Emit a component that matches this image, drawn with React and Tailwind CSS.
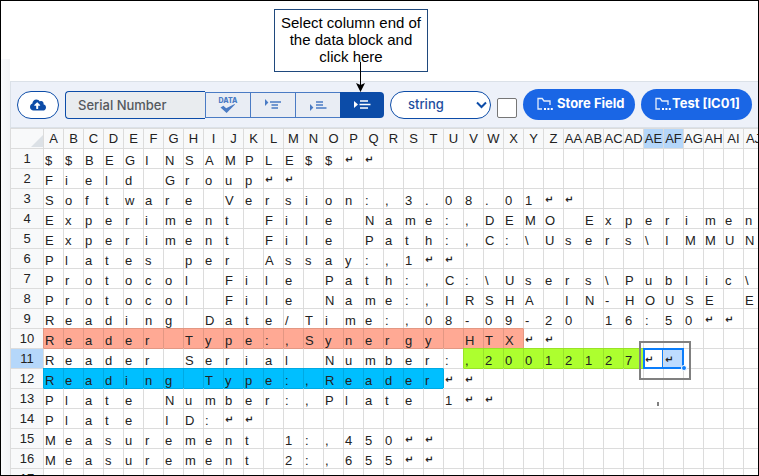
import React from "react";
import { FaCloudUploadAlt } from "react-icons/fa";

const ROWS = [
  "$$BEGINSAMPLE$$↵↵",
  "Field Group↵↵",
  "Software Version:,3.08.01↵↵",
  "Experiment File Name:,DEMO Experimen",
  "Experiment File Path:,C:\\Users\\IMMUN",
  "Plates per Assay:,1↵↵",
  "Protocol File Path:,C:\\Users\\Public\\",
  "Protocol File Name:,IRSHA IN-HOUSE E",
  "Reading Date/Time:,08-09-20 16:50↵↵",
  "Reader Type:,Synergy HTX↵↵",
  "Reader Serial Number:,20012127↵↵",
  "Reading Type:,Reader↵↵",
  "Plate Number:,Plate 1↵↵",
  "Plate ID:↵↵",
  "Measurement 1:,450↵↵",
  "Measurement 2:,655↵↵",
  "",
];

const COLS = Array.from({ length: 36 }, (_, i) =>
  i < 26 ? String.fromCharCode(65 + i) : "A" + String.fromCharCode(39 + i)
);

// Highlighted blocks: row index, first and last column, fill and grid line colours
const BLOCKS = [
  { row: 9, from: 0, to: 23, fill: "bg-[#ffa994]", left: "border-l-[#e29783]", top: "border-t-[#e29783]" },
  { row: 10, from: 21, to: 29, fill: "bg-[#adff2f]", left: "border-l-[#99e229]", top: "border-t-[#99e229]" },
  { row: 11, from: 0, to: 19, fill: "bg-[#00bfff]", left: "border-l-[#00a9e2]", top: "border-t-[#00a9e2]" },
];

function inBlock(b, r, c) {
  return b.row === r && c >= b.from && c <= b.to;
}

function cellStyle(r, c) {
  const own = BLOCKS.find((b) => inBlock(b, r, c));
  const before = BLOCKS.find((b) => inBlock(b, r, c - 1));
  const above = BLOCKS.find((b) => inBlock(b, r - 1, c));
  const fill = own ? own.fill : r === 10 && c === 31 ? "bg-[#bedcff]" : "bg-white";
  const left = own ? own.left : before ? before.left : "border-l-[#dcdcdc]";
  const top = own ? own.top : above ? above.top : "border-t-[#dcdcdc]";
  return `${fill} ${left} ${top}`;
}

function DataIcon() {
  return (
    <span className="flex flex-col items-center text-[#4a7bc4]">
      <span className="text-[7px] leading-[7px] font-extrabold">DATA</span>
      <svg width="16" height="9" viewBox="0 0 16 9" fill="currentColor">
        <path d="M.5 3.4 3.4 1.8 6.2 4.2 14.6 0 15 .5 6.6 8.9Z" />
      </svg>
    </span>
  );
}

function LinesIcon({ at }) {
  const flag = {
    top: "M1 1 4.4 4.5 1 8Z",
    bottom: "M1 6 4.4 9.5 1 13Z",
    middle: "M1 3 5 6.5 1 10Z",
  }[at];
  const lines = {
    top: "M6 4H17M7.5 7H14M7.5 10H14",
    bottom: "M7 4H14M7 7H14M7 10H17.5",
    middle: "M7 3H15M6.5 6.5H17.5M7 10H15",
  }[at];
  return (
    <svg width="18" height="14" viewBox="0 0 18 14">
      <path d={flag} fill="currentColor" />
      <path d={lines} stroke="currentColor" strokeWidth="1.5" />
    </svg>
  );
}

function FolderIcon() {
  return (
    <svg width="16" height="14" viewBox="0 0 16 14" fill="none">
      <path d="M5 12H1V1.5H5.2L7 4H13V8" stroke="#e4edfc" strokeWidth="1.3" />
      <path d="M7 11h2v2H7zM10.4 11h2v2h-2zM13.8 11h2v2h-2z" fill="white" />
    </svg>
  );
}

function Toolbar() {
  const pill = "flex h-[31px] shrink-0 items-center rounded-full bg-[#1a66e5] pb-px pl-[14px] text-[13px] font-bold text-white";
  const tool = "flex w-[45px] items-center justify-center border border-r-0 border-[#4a7bc4] bg-[#e9edf4] text-[#4a7bc4]";
  return (
    <div className="flex h-[46px] shrink-0 items-center overflow-hidden border-t border-l border-[#dbe1e8] bg-[#edf1f9] pl-[6px] font-['Inter',sans-serif] whitespace-nowrap">
      <button aria-label="Upload" className="flex h-7 w-[42px] shrink-0 items-center justify-center rounded-full border border-[#0c4ca8] bg-white text-[#0c4ca8]">
        <FaCloudUploadAlt size={16} />
      </button>
      <input
        aria-label="Field name"
        defaultValue="Serial Number"
        className="ml-[6px] h-7 w-[140px] shrink-0 rounded-l border border-r-0 border-[#0c4ca8] bg-[#e9ecef] pl-3 text-[13px] font-medium text-[#55595e]"
      />
      <div className="flex h-[26px] shrink-0">
        <button aria-label="Data check" className={tool}><DataIcon /></button>
        <button aria-label="Row start" className={tool}><LinesIcon at="top" /></button>
        <button aria-label="Row end" className={tool}><LinesIcon at="bottom" /></button>
        <button aria-label="Column end" className="flex w-11 items-center justify-center rounded-r bg-[#0c4ca8] text-white"><LinesIcon at="middle" /></button>
      </div>
      <div className="relative ml-[6px] shrink-0">
        <select aria-label="Type" className="block h-7 w-[101px] appearance-none rounded-full border border-[#0c4ca8] bg-white pl-[17px] text-[13px] font-medium text-[#1d4e9e]">
          <option>string</option>
        </select>
        <svg className="pointer-events-none absolute top-[10px] right-[4px]" width="11" height="8" viewBox="0 0 11 8" fill="none" stroke="#0c4ca8" strokeWidth="2">
          <path d="M1 1.5 5.5 6 10 1.5" />
        </svg>
      </div>
      <input type="checkbox" aria-label="Required" className="mt-[6px] ml-[6px] h-5 w-5 shrink-0 appearance-none rounded-[2px] border border-[#767676] bg-white" />
      <button className={`${pill} ml-[6px] w-28 gap-1`}><FolderIcon />Store Field</button>
      <button className={`${pill} ml-[6px] w-[111px] gap-px`}><FolderIcon />Test [IC01]</button>
    </div>
  );
}

function Sheet() {
  const head = "border-t border-l border-[#dcdcdc] p-0 align-top font-normal";
  return (
    <div className="relative min-h-0 flex-1 overflow-hidden border-t border-[#dbe1e8]">
      <table className="w-[753px] table-fixed border-separate border-spacing-0 text-[13px] text-[#222]">
        <colgroup>
          <col className="w-[33px]" />
          {COLS.map((c) => <col key={c} className="w-[20px]" />)}
        </colgroup>
        <thead>
          <tr className="h-5">
            <th className={`${head} bg-[#f8f9fa]`}>
              <svg className="mt-[6px] ml-auto" width="12" height="12" viewBox="0 0 12 12"><path d="M12 0V12H0Z" fill="#dce1e6" /></svg>
            </th>
            {COLS.map((c) => (
              <th key={c} className={`${head} text-center leading-[19px] whitespace-nowrap ${c === "AE" || c === "AF" ? "bg-[#b5d7fa]" : "bg-[#f8f9fa]"}`}>
                <span className="-mx-1 block">{c}</span>
              </th>
            ))}
          </tr>
        </thead>
        <tbody>
          {ROWS.map((text, r) => (
            <tr key={r} className="h-5">
              <th scope="row" className={`${head} text-center leading-[19px] ${r === 10 ? "bg-[#b5d7fa]" : "bg-[#f8f9fa]"}`}>{r + 1}</th>
              {COLS.map((c, i) => (
                <td key={c} className={`h-5 border-t border-l p-0 pt-1 pl-px align-top leading-[15px] ${cellStyle(r, i)}`}>
                  {text[i] === "↵" ? (
                    <span className="block font-['Liberation_Sans','DejaVu_Sans',sans-serif] text-[10px] leading-[13px] font-bold">↵</span>
                  ) : (
                    text[i]
                  )}
                </td>
              ))}
            </tr>
          ))}
        </tbody>
      </table>
      {/* Selected range with its fill handle, and the annotation frame around it */}
      <div className="pointer-events-none absolute top-[220px] left-[633px] h-[21px] w-[41px] border-2 border-[#0b7dfa]">
        <div className="h-full w-[18px] border-r border-[#0b7dfa]" />
        <div className="absolute -right-[5px] -bottom-[4px] box-content h-1 w-1 rounded-full border border-white bg-[#0b7dfa]" />
      </div>
      <div className="pointer-events-none absolute top-[213px] left-[629px] h-[39px] w-[52px] border-2 border-[#808080]" />
      <div className="pointer-events-none absolute top-[274px] left-[647px] h-1 w-[2px] bg-[#808080]" />
    </div>
  );
}

export default function App() {
  return (
    <div className="relative flex h-screen flex-col overflow-hidden border border-black bg-white font-['Liberation_Sans',Arial,sans-serif]">
      <main className="flex min-h-0 flex-1 pt-[58px]">
        <div className="w-[9px] shrink-0 bg-gradient-to-r from-[#fafbfd] to-[#f3f4f7]" />
        <div className="flex min-w-0 flex-1 flex-col pt-[22px]">
          <Toolbar />
          <Sheet />
        </div>
      </main>
      <div className="absolute top-2 left-[273px] h-[63px] w-[154px] border border-[#1f497d] bg-white pt-1 text-center text-[15px] leading-[17px] text-black">
        Select column end of<br />the data block and<br />click here
      </div>
      <svg className="absolute top-[61px] left-[354px]" width="12" height="31" viewBox="0 0 12 31">
        <path d="M5.5 0V24" stroke="black" strokeWidth="1" />
        <path d="M5.5 30 1 21 5.5 23 10 21Z" fill="black" />
      </svg>
    </div>
  );
}
